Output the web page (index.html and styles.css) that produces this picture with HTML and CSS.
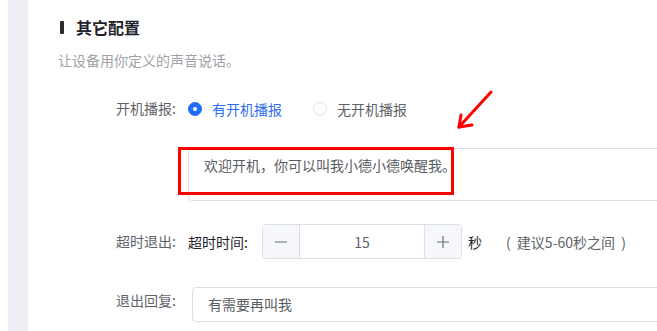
FILE: index.html
```html
<!DOCTYPE html>
<html lang="zh-CN">
<head>
<meta charset="utf-8">
<link rel="stylesheet" href="styles.css">
</head>
<body>
<div class="page">
  <div class="edge"></div>
  <div class="rail"></div>
  <main class="content">
    <h2 class="title"><span class="bar"></span>其它配置</h2>
    <p class="desc">让设备用你定义的声音说话。</p>
    <div class="form">
      <div class="item">
        <div class="label label-radio">开机播报:</div>
        <div class="control">
          <div class="radios">
            <span class="radio radio-on"><span class="dot"></span><span class="radio-text">有开机播报</span></span>
            <span class="radio"><span class="dot"></span><span class="radio-text">无开机播报</span></span>
          </div>
          <div class="textarea">欢迎开机，你可以叫我小德小德唤醒我。</div>
        </div>
      </div>
      <div class="item item-stepper">
        <div class="label label-stepper">超时退出:</div>
        <div class="control control-row">
          <span class="sub-label">超时时间:</span>
          <div class="stepper">
            <span class="step-btn step-minus"><svg width="12" height="12" viewBox="0 0 12 12"><line x1="0" y1="6" x2="12" y2="6" stroke="#6b6f76" stroke-width="1.2"/></svg></span>
            <span class="step-value">15</span>
            <span class="step-btn step-plus"><svg width="12" height="12" viewBox="0 0 12 12"><line x1="0" y1="6" x2="12" y2="6" stroke="#6b6f76" stroke-width="1.2"/><line x1="6" y1="0" x2="6" y2="12" stroke="#6b6f76" stroke-width="1.2"/></svg></span>
          </div>
          <span class="unit">秒</span>
          <span class="hint">( 建议5-60秒之间 )</span>
        </div>
      </div>
      <div class="item item-input">
        <div class="label label-input">退出回复:</div>
        <div class="control">
          <div class="input">有需要再叫我</div>
        </div>
      </div>
    </div>
  </main>
  <div class="mark-box"></div>
  <svg class="mark-arrow" width="50" height="50" viewBox="450 85 50 50">
    <g stroke="#ff0000" stroke-width="3" stroke-linecap="round" fill="none">
      <line x1="491" y1="92" x2="459" y2="127"/>
      <line x1="459" y1="127" x2="461" y2="115"/>
      <line x1="459" y1="127" x2="472" y2="125"/>
    </g>
  </svg>
</div>
</body>
</html>
```

FILE: styles.css
```css
html, body {
  margin: 0;
  padding: 0;
  background: #ffffff;
  overflow: hidden;
}

body {
  font-family: "Noto Sans CJK SC", "Noto Sans", sans-serif;
  color: #606266;
}

.page {
  position: relative;
  display: flex;
  width: 657px;
  height: 331px;
  overflow: hidden;
}

.edge {
  width: 8px;
  flex: none;
  background: #ffffff;
}

.rail {
  width: 20px;
  flex: none;
  background: #eeeff4;
}

.content {
  flex: 1;
  min-width: 0;
  padding: 15px 0 0 30px;
  overflow: hidden;
}

.title {
  margin: 0;
  padding-left: 2px;
  display: flex;
  align-items: center;
  font-size: 16px;
  line-height: 24px;
  font-weight: 700;
  color: #1f2329;
}

.bar {
  width: 4px;
  height: 13px;
  border-radius: 1px;
  background: #2b2b2b;
  margin-right: 12px;
}

.desc {
  margin: 11px 0 0;
  font-size: 14px;
  line-height: 20px;
  color: #9fa2a8;
}

.form {
  margin-top: 23px;
}

.item {
  display: flex;
  align-items: flex-start;
}

.item-stepper {
  margin-top: 23px;
}

.item-input {
  margin-top: 28px;
}

.label {
  width: 130px;
  flex: none;
  box-sizing: border-box;
  padding-right: 12px;
  text-align: right;
  font-size: 14px;
  color: #5f6368;
}

.label-radio {
  line-height: 31px;
}

.label-stepper {
  line-height: 35px;
}

.label-input {
  line-height: 26px;
}

.control {
  flex: 1;
  min-width: 0;
}

.radios {
  display: flex;
  align-items: center;
  height: 32px;
  font-size: 14px;
}

.radio {
  display: inline-flex;
  align-items: center;
  margin-right: 31px;
  color: #606266;
}

.dot {
  position: relative;
  width: 14px;
  height: 14px;
  box-sizing: border-box;
  border-radius: 50%;
  border: 1px solid #dcdfe6;
  background: #ffffff;
  margin-right: 10px;
}

.radio-on .dot {
  background: #1f6ef7;
  border-color: #1f6ef7;
}

.radio-on .dot::after {
  content: "";
  position: absolute;
  left: 4px;
  top: 4px;
  width: 4px;
  height: 4px;
  border-radius: 50%;
  background: #ffffff;
}

.radio-on .radio-text {
  color: #2c6cf2;
}

.textarea {
  margin-top: 23px;
  width: 540px;
  height: 53px;
  box-sizing: border-box;
  border: 1px solid #dcdfe6;
  border-radius: 4px;
  padding: 5px 15px;
  font-size: 14px;
  line-height: 22px;
  color: #5a5d63;
  white-space: nowrap;
}

.control-row {
  display: flex;
  align-items: center;
  height: 35px;
}

.sub-label {
  width: 74px;
  flex: none;
  font-size: 14px;
  color: #1f2329;
  font-weight: 400;
}

.stepper {
  display: flex;
  width: 200px;
  height: 35px;
  box-sizing: border-box;
  border: 1px solid #dcdfe6;
  border-radius: 4px;
  overflow: hidden;
  flex: none;
}

.step-btn {
  width: 36px;
  flex: none;
  display: flex;
  align-items: center;
  justify-content: center;
  background: #f5f7fa;
}

.step-minus {
  border-right: 1px solid #dcdfe6;
}

.step-plus {
  border-left: 1px solid #dcdfe6;
}

.step-value {
  flex: 1;
  display: flex;
  align-items: center;
  justify-content: center;
  font-size: 14px;
  color: #606266;
}

.unit {
  margin-left: 6px;
  font-size: 14px;
  color: #1f2329;
}

.hint {
  margin-left: 24px;
  font-size: 14px;
  color: #606266;
  white-space: pre;
  word-spacing: 3px;
}

.input {
  margin-left: 4px;
  width: 540px;
  height: 35px;
  box-sizing: border-box;
  border: 1px solid #dcdfe6;
  border-radius: 4px;
  padding: 0 15px;
  font-size: 14px;
  line-height: 33px;
  color: #5a5d63;
  white-space: nowrap;
}

.mark-box {
  position: absolute;
  left: 178px;
  top: 147px;
  width: 276px;
  height: 48px;
  box-sizing: border-box;
  border: 3px solid #ff0000;
}

.mark-arrow {
  position: absolute;
  left: 450px;
  top: 85px;
}
```
